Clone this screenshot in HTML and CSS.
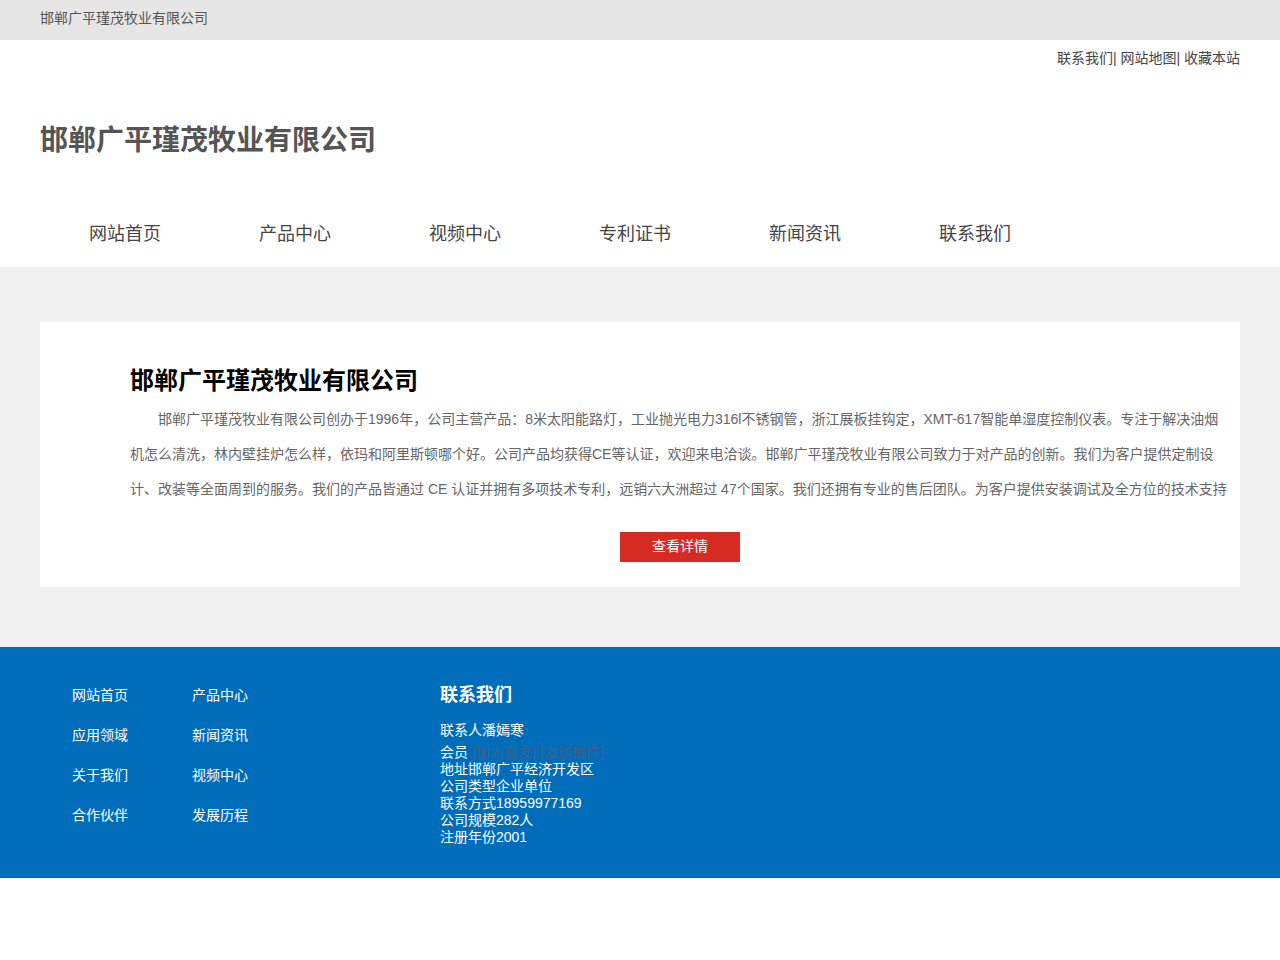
FILE: index.html
```html
<!DOCTYPE html>
<html lang="zh-CN">
    <head>
        <meta charset="utf-8">
        <title>邯郸广平瑾茂牧业有限公司</title>
        <link rel="stylesheet" href="styles.css">
    </head>
    <body>
        <div class="topbar">
            <div class="wrap">邯郸广平瑾茂牧业有限公司</div>
        </div>

        <header class="header">
            <div class="wrap">
                <div class="toplinks">
                    <a href="#">联系我们</a>| <a href="#">网站地图</a>| <a href="#">收藏本站</a>
                </div>
                <h1 class="logo">邯郸广平瑾茂牧业有限公司</h1>
                <ul class="nav">
                    <li><a href="#">网站首页</a></li>
                    <li><a href="#">产品中心</a></li>
                    <li><a href="#">视频中心</a></li>
                    <li><a href="#">专利证书</a></li>
                    <li><a href="#">新闻资讯</a></li>
                    <li><a href="#">联系我们</a></li>
                </ul>
            </div>
        </header>

        <section class="main">
            <div class="wrap">
                <div class="about">
                    <h2>邯郸广平瑾茂牧业有限公司</h2>
                    <p>邯郸广平瑾茂牧业有限公司创办于1996年，公司主营产品：8米太阳能路灯，工业抛光电力316l不锈钢管，浙江展板挂钩定，XMT-617智能单湿度控制仪表。专注于解决油烟机怎么清洗，林内壁挂炉怎么样，依玛和阿里斯顿哪个好。公司产品均获得CE等认证，欢迎来电洽谈。邯郸广平瑾茂牧业有限公司致力于对产品的创新。我们为客户提供定制设计、改装等全面周到的服务。我们的产品皆通过 CE 认证并拥有多项技术专利，远销六大洲超过 47个国家。我们还拥有专业的售后团队。为客户提供安装调试及全方位的技术支持</p>
                    <div class="more"><a href="#" class="more-btn">查看详情</a></div>
                </div>
            </div>
        </section>

        <footer class="footer">
            <div class="wrap footer-inner">
                <ul class="foot-links">
                    <li><a href="#">网站首页</a></li>
                    <li><a href="#">产品中心</a></li>
                    <li><a href="#">应用领域</a></li>
                    <li><a href="#">新闻资讯</a></li>
                    <li><a href="#">关于我们</a></li>
                    <li><a href="#">视频中心</a></li>
                    <li><a href="#">合作伙伴</a></li>
                    <li><a href="#">发展历程</a></li>
                </ul>
                <div class="contact">
                    <h3>联系我们</h3>
                    <p class="person">联系人潘嫣寒</p>
                    <p>会员 <a href="#" class="dim">[加为商友]</a> <a href="#" class="dim">[发送信件]</a></p>
                    <p>地址邯郸广平经济开发区</p>
                    <p>公司类型企业单位</p>
                    <p>联系方式18959977169</p>
                    <p>公司规模282人</p>
                    <p>注册年份2001</p>
                </div>
            </div>
        </footer>
    </body>
</html>
```

FILE: styles.css
```css
body {
    margin: 0;
    font-family: "Liberation Sans", "Noto Sans CJK SC", sans-serif;
    color: #555;
    background-color: #fff;
}

a {
    color: inherit;
    text-decoration: none;
}

ul {
    list-style: none;
    margin: 0;
    padding: 0;
}

.wrap {
    width: 1200px;
    margin: 0 auto;
}

/* top strip */
.topbar {
    height: 40px;
    background-color: #e6e6e6;
    font-size: 14px;
    line-height: 36px;
    color: #555;
}

.header {
    height: 227px;
}

.toplinks {
    text-align: right;
    font-size: 14px;
    line-height: 18px;
    padding-top: 9px;
    color: #444;
}

.logo {
    margin: 0;
    padding-top: 54px;
    font-size: 28px;
    line-height: 40px;
    color: #555;
}

.nav {
    display: flex;
    margin-top: 58px;
}

.nav li {
    width: 170px;
    text-align: center;
    font-size: 18px;
    line-height: 30px;
    color: #444;
}

/* about block */
.main {
    background-color: #f1f1f1;
    padding: 55px 0 60px;
}

.about {
    background-color: #fff;
    padding: 43px 10px 25px 90px;
}

.about h2 {
    margin: 0;
    font-size: 24px;
    line-height: 32px;
    color: #000;
}

.about p {
    margin: 5px 0 0;
    font-size: 14px;
    line-height: 35px;
    color: #666;
    text-indent: 2em;
}

.more {
    text-align: center;
    margin-top: 25px;
}

.more-btn {
    display: inline-block;
    width: 120px;
    height: 30px;
    line-height: 28px;
    background-color: #d52b23;
    color: #fff;
    font-size: 14px;
}

/* footer */
.footer {
    background-color: #006dbb;
    color: #fff;
    padding: 28px 0 32px;
}

.footer-inner {
    display: flex;
}

.foot-links {
    width: 240px;
    margin-left: 32px;
    display: grid;
    grid-template-columns: 120px 120px;
    align-content: start;
}

.foot-links li {
    font-size: 14px;
    line-height: 40px;
}

.contact {
    margin-left: 128px;
    font-size: 14px;
    line-height: 17px;
}

.contact h3 {
    margin: 0;
    padding-top: 8px;
    font-size: 18px;
    line-height: 24px;
}

.contact p {
    margin: 0;
}

.contact .person {
    margin-top: 15px;
    margin-bottom: 5px;
}

.dim {
    color: #3f5f85;
}
```
